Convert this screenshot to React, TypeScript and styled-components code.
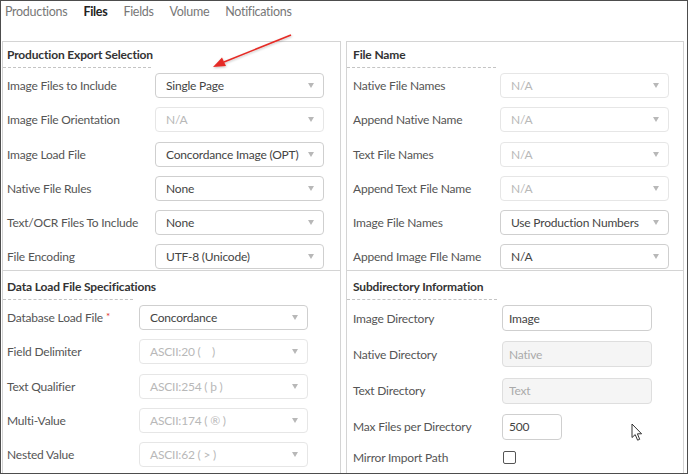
import React from 'react'
import styled, {createGlobalStyle} from 'styled-components'

const GlobalStyle = createGlobalStyle`
  body {
    margin: 0;
    background: #fff;
    font-family: Lato, 'Open Sans', sans-serif;
  }
`

type Field = {label: string; value: string; disabled?: boolean; required?: boolean}

const exportRows: Field[] = [
  {label: 'Image Files to Include', value: 'Single Page'},
  {label: 'Image File Orientation', value: 'N/A', disabled: true},
  {label: 'Image Load File', value: 'Concordance Image (OPT)'},
  {label: 'Native File Rules', value: 'None'},
  {label: 'Text/OCR Files To Include', value: 'None'},
  {label: 'File Encoding', value: 'UTF-8 (Unicode)'},
]

const nameRows: Field[] = [
  {label: 'Native File Names', value: 'N/A', disabled: true},
  {label: 'Append Native Name', value: 'N/A', disabled: true},
  {label: 'Text File Names', value: 'N/A', disabled: true},
  {label: 'Append Text File Name', value: 'N/A', disabled: true},
  {label: 'Image File Names', value: 'Use Production Numbers'},
  {label: 'Append Image FIle Name', value: 'N/A'},
]

const loadRows: Field[] = [
  {label: 'Database Load File', value: 'Concordance', required: true},
  {label: 'Field Delimiter', value: 'ASCII:20 (\u00a0\u00a0\u00a0\u00a0)', disabled: true},
  {label: 'Text Qualifier', value: 'ASCII:254 ( þ )', disabled: true},
  {label: 'Multi-Value', value: 'ASCII:174 ( ® )', disabled: true},
  {label: 'Nested Value', value: 'ASCII:62 ( > )', disabled: true},
]

const tabs = ['Productions', 'Files', 'Fields', 'Volume', 'Notifications']

const SelectField = ({value, disabled}: {value: string; disabled?: boolean}) => (
  <Select $disabled={disabled}>
    <span>{value}</span>
    <Caret />
  </Select>
)

const App = () => {
  return (
    <>
      <GlobalStyle />
      <Frame>
        <Tabs>
          {tabs.map((t) => (
            <Tab key={t} $active={t === 'Files'}>
              {t}
            </Tab>
          ))}
        </Tabs>
        <Columns>
          <Column>
            <Section $top={3}>
              <Heading $line={148} $indent={4}>Production Export Selection</Heading>
              <Rows $indent={4} $label={148} $gap={9.3}>
                {exportRows.map((r) => (
                  <React.Fragment key={r.label}>
                    <Label>{r.label}</Label>
                    <SelectField value={r.value} disabled={r.disabled} />
                  </React.Fragment>
                ))}
              </Rows>
            </Section>
            <Section $top={6} $divided>
              <Heading $line={130} $indent={4}>Data Load File Specifications</Heading>
              <Rows $indent={4} $label={132} $gap={9.3}>
                {loadRows.map((r) => (
                  <React.Fragment key={r.label}>
                    <Label>
                      {r.label}
                      {r.required && <Required>*</Required>}
                    </Label>
                    <SelectField value={r.value} disabled={r.disabled} />
                  </React.Fragment>
                ))}
              </Rows>
            </Section>
          </Column>
          <Column>
            <Section $top={3}>
              <Heading $line={149} $indent={6}>File Name</Heading>
              <Rows $indent={6} $label={147} $gap={9.3}>
                {nameRows.map((r) => (
                  <React.Fragment key={r.label}>
                    <Label>{r.label}</Label>
                    <SelectField value={r.value} disabled={r.disabled} />
                  </React.Fragment>
                ))}
              </Rows>
            </Section>
            <Section $top={6} $divided>
              <Heading $line={150} $indent={6}>Subdirectory Information</Heading>
              <Rows $indent={6} $label={149} $gap={10.3}>
                <Label>Image Directory</Label>
                <TextInput value="Image" readOnly $width={150} />
                <Label>Native Directory</Label>
                <TextInput value="Native" readOnly disabled $width={150} />
                <Label>Text Directory</Label>
                <TextInput value="Text" readOnly disabled $width={150} />
                <Label>Max Files per Directory</Label>
                <TextInput value="500" readOnly $width={60} />
                <CheckLabel>Mirror Import Path</CheckLabel>
                <Checkbox />
              </Rows>
            </Section>
          </Column>
        </Columns>
        <Pointer width="300" height="80" viewBox="0 0 300 80">
          <defs>
            <filter id="sh" x="-10%" y="-30%" width="130%" height="170%">
              <feDropShadow dx="0.5" dy="1" stdDeviation="0.8" floodColor="#000" floodOpacity="0.25" />
            </filter>
          </defs>
          <g filter="url(#sh)">
            <line x1="291" y1="35" x2="224" y2="62" stroke="#e52b25" strokeWidth="1.6" />
            <polygon points="213,67 222,57.5 226,66" fill="#e52b25" />
          </g>
        </Pointer>
        <Cursor width="12" height="19" viewBox="0 0 12 19">
          <path
            d="M1 1 L1 14.5 L4.2 11.6 L6.6 17.2 L8.7 16.3 L6.4 10.8 L10.6 10.8 Z"
            fill="#fff"
            stroke="#333"
            strokeWidth="1"
            strokeLinejoin="round"
          />
        </Cursor>
      </Frame>
    </>
  )
}

export default App

const Frame = styled.div`
  position: relative;
  width: 688px;
  height: 474px;
  box-sizing: border-box;
  border: 1px solid #4d4d4d;
  overflow: hidden;
  background: #fff;
`

const Tabs = styled.div`
  display: flex;
  gap: 16px;
  height: 40px;
  padding: 3px 0 0 4px;
  box-sizing: border-box;
`

const Tab = styled.div<{$active?: boolean}>`
  font-size: 12.5px;
  letter-spacing: -0.3px;
  line-height: 16px;
  color: ${(p) => (p.$active ? '#222' : '#777')};
  font-weight: ${(p) => (p.$active ? 700 : 400)};
`

const Columns = styled.div`
  display: grid;
  grid-template-columns: 339px 338px;
  column-gap: 5px;
  margin-left: 1px;
`

const Column = styled.div`
  display: flex;
  flex-direction: column;
  border: 1px solid #d4d4d4;
  height: 460px;
`

const Section = styled.div<{$top: number; $divided?: boolean}>`
  padding-top: ${(p) => p.$top}px;
  border-top: ${(p) => (p.$divided ? '1px solid #d4d4d4' : 'none')};
  height: ${(p) => (p.$divided ? 'auto' : '228px')};
  box-sizing: border-box;
`

const Heading = styled.div<{$line: number; $indent: number}>`
  width: ${(p) => p.$line}px;
  padding: 1px 0 3px ${(p) => p.$indent}px;
  box-sizing: border-box;
  border-bottom: 1px dashed #c4c4c4;
  white-space: nowrap;
  font-size: 12px;
  letter-spacing: -0.15px;
  line-height: 18px;
  font-weight: 700;
  color: #333;
`

const Rows = styled.div<{$indent: number; $label: number; $gap: number}>`
  display: grid;
  grid-template-columns: ${(p) => p.$label}px 1fr;
  row-gap: ${(p) => p.$gap}px;
  align-items: center;
  padding: 5px 0 0 ${(p) => p.$indent}px;
`

const Label = styled.div`
  font-size: 12px;
  letter-spacing: -0.2px;
  color: #555;
  white-space: nowrap;
`

const CheckLabel = styled(Label)`
  margin-top: 0;
`

const Required = styled.span`
  color: #e0302a;
  margin-left: 3px;
  font-size: 10px;
  vertical-align: top;
`

const Select = styled.div<{$disabled?: boolean}>`
  display: flex;
  align-items: center;
  justify-content: space-between;
  width: 169px;
  height: 25px;
  box-sizing: border-box;
  padding: 0 9px 0 10px;
  border: 1px solid ${(p) => (p.$disabled ? '#e6e6e6' : '#cfcfcf')};
  border-radius: 4px;
  background: #fff;
  font-size: 12px;
  letter-spacing: -0.2px;
  color: ${(p) => (p.$disabled ? '#b8b8b8' : '#444')};
  white-space: nowrap;
`

const Caret = styled.i`
  width: 0;
  height: 0;
  border-left: 3px solid transparent;
  border-right: 3px solid transparent;
  border-top: 5px solid #b8b8b8;
`

const TextInput = styled.input<{$width: number}>`
  width: ${(p) => p.$width}px;
  height: 26px;
  box-sizing: border-box;
  padding: 0 6px;
  border: 1px solid #cfcfcf;
  border-radius: 4px;
  background: #fff;
  font-family: inherit;
  font-size: 12px;
  letter-spacing: -0.2px;
  color: #444;
  outline: none;

  &:disabled {
    background: #f5f5f5;
    border-color: #dedede;
    color: #aaa;
  }
`

const Checkbox = styled.span`
  display: block;
  width: 11px;
  height: 11px;
  margin: 0 0 0 1px;
  border: 1.5px solid #555;
  border-radius: 2px;
`

const Pointer = styled.svg`
  position: absolute;
  left: -1px;
  top: -1px;
  pointer-events: none;
`

const Cursor = styled.svg`
  position: absolute;
  left: 630px;
  top: 422px;
`
